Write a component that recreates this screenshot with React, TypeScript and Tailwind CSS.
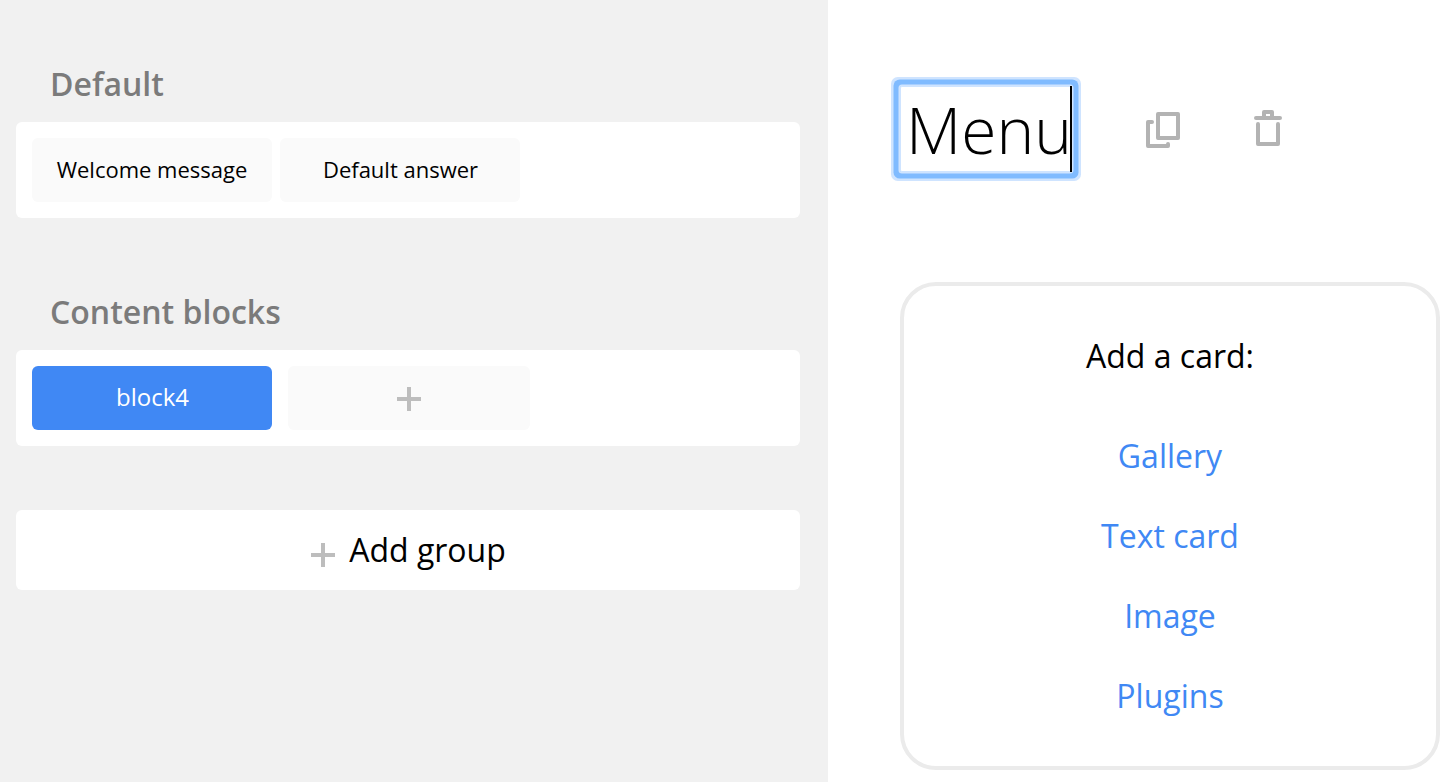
const options = ["Gallery", "Text card", "Image", "Plugins"];

function Plus({ className = "" }: { className?: string }) {
  return (
    <svg className={`size-6 shrink-0 ${className}`} viewBox="0 0 24 24" stroke="#bdbdbd" strokeWidth="4">
      <path d="M0 12h24M12 0v24" />
    </svg>
  );
}

export default function App() {
  return (
    <div className="flex h-[782px] w-[1452px] overflow-hidden bg-white font-['Open_Sans',sans-serif] text-black">
      <aside className="w-[828px] bg-[#f1f1f1] pr-7 pl-4">
        <h2 className="mt-[61px] h-[61px] pl-[34px] text-[32px] leading-[45px] font-semibold text-[#7b7b7b]">Default</h2>
        <div className="flex h-24 gap-2 rounded-md bg-white p-4 text-[22px]">
          <button className="h-16 w-60 rounded-md bg-[#fafafa] pb-0.5">Welcome message</button>
          <button className="h-16 w-60 rounded-md bg-[#fafafa] pb-0.5 pl-px">Default answer</button>
        </div>
        <h2 className="mt-[71px] h-[61px] pl-[34px] text-[32px] leading-[45px] font-semibold text-[#7b7b7b]">Content blocks</h2>
        <div className="flex h-24 gap-4 rounded-md bg-white p-4 text-2xl">
          <button className="h-16 w-60 rounded-md bg-[#4088f4] pb-0.5 pl-px text-white">block4</button>
          <button className="flex h-16 w-[242px] items-center justify-center rounded-md bg-[#fafafa] pt-0.5"><Plus /></button>
        </div>
        <button className="mt-16 flex h-20 w-full items-center justify-center gap-[14px] rounded-md bg-white pl-px text-[32px]">
          <Plus className="mt-[9px]" />Add group
        </button>
      </aside>
      <main className="flex-1 pl-[72px]">
        <header className="mt-[86px] flex h-[86px]">
          <div className="flex h-[86px] w-[172px] items-center rounded-[2px] pl-1.5 text-[64px] font-light shadow-[inset_0_0_0_1px_#cfe4ff,0_0_0_1.5px_#cfe4ff,0_0_0_6.5px_#80bbff,0_0_0_9px_#cfe4ff]">
            <span className="w-[164px] shrink-0 pt-0.5">Menu</span>
            <span className="h-[86px] w-[2px] shrink-0 bg-black" />
          </div>
          <svg className="mt-6 ml-[73px] h-10 w-9" viewBox="0 0 36 40" fill="none" stroke="#b3b3b3" strokeWidth="4" strokeLinecap="round" strokeLinejoin="round">
            <path d="M13 4h20v24H13zM7 12H3v24h20v-2" />
          </svg>
          <svg className="mt-6 ml-[73px] h-10 w-7" viewBox="0 0 28 40" fill="none" stroke="#b3b3b3" strokeWidth="4" strokeLinecap="round" strokeLinejoin="round">
            <path d="M2 8h24M10 8V2h8v6M4 14v20h20V14" />
          </svg>
        </header>
        <section className="mt-[110px] flex h-[488px] w-[540px] flex-col items-center rounded-[36px] border-4 border-[#ebebeb] pt-[46px] text-[32px]">
          <p className="mb-[52px] leading-[48px]">Add a card:</p>
          <div className="flex flex-col gap-8 text-[#4088f4]">
            {options.map((o) => <button key={o} className="leading-[48px]">{o}</button>)}
          </div>
        </section>
      </main>
    </div>
  );
}
